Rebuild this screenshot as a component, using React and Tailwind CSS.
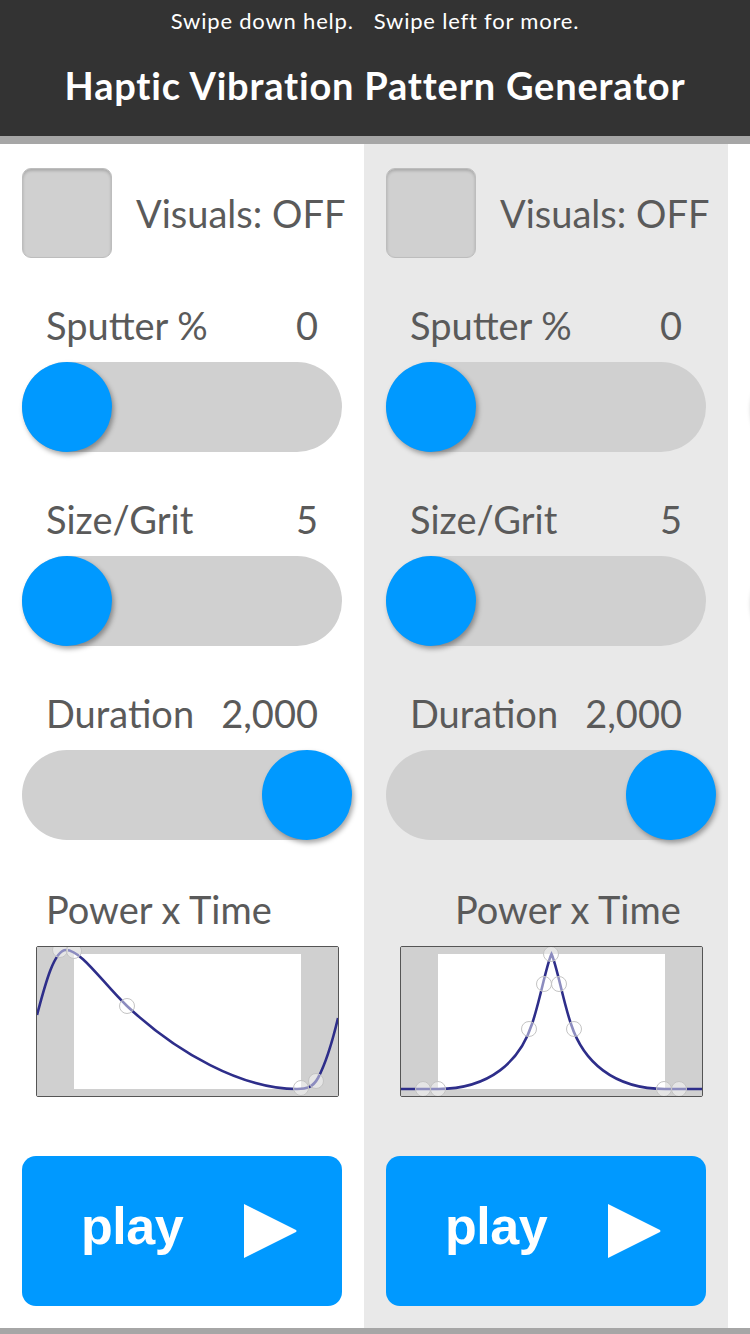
import React from "react";

const FONT = { fontFamily: "Lato, 'Noto Sans', sans-serif" };

function Chart1() {
  const pts = [[24, 4], [38, 5], [91, 60], [265, 142], [280, 135]];
  return (
    <svg width="301" height="149" viewBox="0 0 301 149" className="block">
      <rect x="0" y="0" width="301" height="149" fill="#d0d0d0" />
      <rect x="37" y="7" width="227" height="135" fill="#ffffff" />
      <path
        d="M0,68 C8,38 17,3 29,3 C44,3 65,35 90,59 C140,106 205,142 260,142 C270,142 276,140 281,131 C290,114 296,92 301,71"
        fill="none"
        stroke="#2e2e8a"
        strokeWidth="2.6"
      />
      {pts.map(([x, y], i) => (
        <circle key={i} cx={x - 1} cy={y - 1} r="7.5" fill="rgba(255,255,255,0.45)" stroke="#c4c4c4" strokeWidth="1" />
      ))}
    </svg>
  );
}

function Chart2() {
  const pts = [[23, 143], [38, 143], [129, 83], [144, 38], [159, 38], [174, 83], [264, 143], [279, 143], [151, 8]];
  return (
    <svg width="301" height="149" viewBox="0 0 301 149" className="block">
      <rect x="0" y="0" width="301" height="149" fill="#d0d0d0" />
      <rect x="37" y="7" width="227" height="135" fill="#ffffff" />
      <path
        d="M0,142 L37,142 C89,142 119,114 131,77 C139,54 145,19 150.5,7 C156,19 162,54 170,77 C182,114 212,142 264,142 L301,142"
        fill="none"
        stroke="#2e2e8a"
        strokeWidth="2.6"
      />
      {pts.map(([x, y], i) => (
        <circle key={i} cx={x - 1} cy={y - 1} r="7.5" fill="rgba(255,255,255,0.45)" stroke="#c4c4c4" strokeWidth="1" />
      ))}
    </svg>
  );
}

function Slider({ label, value, right, ghost }) {
  return (
    <div className="flex flex-col">
      <div className="flex w-[320px] items-center justify-between px-[24px] h-[36px] text-[38px] text-[#5a5a5a] leading-none">
        <span>{ghost ? "" : label}</span>
        <span>{ghost ? "" : value}</span>
      </div>
      <div className="relative mt-[19px] h-[90px] w-[320px] rounded-full bg-[#d0d0d0]">
        <div
          className={
            right
              ? "absolute left-[240px] top-0 h-[90px] w-[90px] rounded-full bg-[#0099ff] shadow-[2px_3px_5px_rgba(0,0,0,0.35)]"
              : "absolute left-0 top-0 h-[90px] w-[90px] rounded-full bg-[#0099ff] shadow-[2px_3px_5px_rgba(0,0,0,0.35)]"
          }
        />
      </div>
    </div>
  );
}

function Column({ bg, second, ghost }) {
  return (
    <div className={`flex w-[364px] shrink-0 flex-col pl-[22px] ${bg}`}>
      <div className="mt-[24px] flex items-center">
        <div className="h-[90px] w-[90px] rounded-[9px] border border-[#bdbdbd] bg-[#d0d0d0] shadow-[inset_0_2px_3px_rgba(0,0,0,0.18)]" />
        {!ghost && (
          <span className="ml-[24px] text-[38px] text-[#5a5a5a] leading-none">Visuals: OFF</span>
        )}
      </div>
      <div className="mt-[49px] flex flex-col gap-[49px]">
        <Slider label="Sputter %" value="0" ghost={ghost} />
        <Slider label="Size/Grit" value="5" ghost={ghost} />
        <Slider label="Duration" value="2,000" right ghost={ghost} />
      </div>
      <div className={`mt-[50px] h-[36px] text-[38px] text-[#5a5a5a] leading-none ${second ? "pl-[69px]" : "pl-[24px]"}`}>
        {ghost ? "" : "Power x Time"}
      </div>
      <div className="mt-[20px] ml-[14px] w-[303px] overflow-hidden rounded-[2px] border border-[#555555]">
        {second ? <Chart2 /> : <Chart1 />}
      </div>
      <div className="mt-[59px] flex h-[150px] w-[320px] items-center rounded-[14px] bg-[#0099ff] pl-[59px]">
        {!ghost && (
          <span
            className="text-[52px] font-bold text-white leading-none tracking-[-0.5px] -mt-[10px]"
            style={{ fontFamily: "'Liberation Sans', Arial, sans-serif" }}
          >
            play
          </span>
        )}
        <svg width="54" height="54" viewBox="0 0 54 54" className="ml-[61px]">
          <path d="M0,0 L52,26 Q53,27 52,28 L0,54 Z" fill="#ffffff" />
        </svg>
      </div>
    </div>
  );
}

export default function App() {
  return (
    <div className="h-[1334px] w-[750px] overflow-hidden bg-white flex flex-col" style={FONT}>
      <div className="h-[136px] bg-[#333333] flex flex-col items-center">
        <div className="mt-[7px] text-[22px] text-white leading-[28px] tracking-[0.8px]">
          Swipe down help.<span className="inline-block w-[20px]" />Swipe left for more.
        </div>
        <div className="mt-[31px] text-[38px] font-bold text-white leading-none tracking-[0.8px]">
          Haptic Vibration Pattern Generator
        </div>
      </div>
      <div className="h-[8px] bg-[#a6a6a6]" />
      <div className="flex h-[1184px] overflow-hidden">
        <Column bg="bg-white" />
        <Column bg="bg-[#e9e9e9]" second />
        <Column bg="bg-white" ghost />
      </div>
      <div className="h-[6px] bg-[#a6a6a6]" />
    </div>
  );
}
